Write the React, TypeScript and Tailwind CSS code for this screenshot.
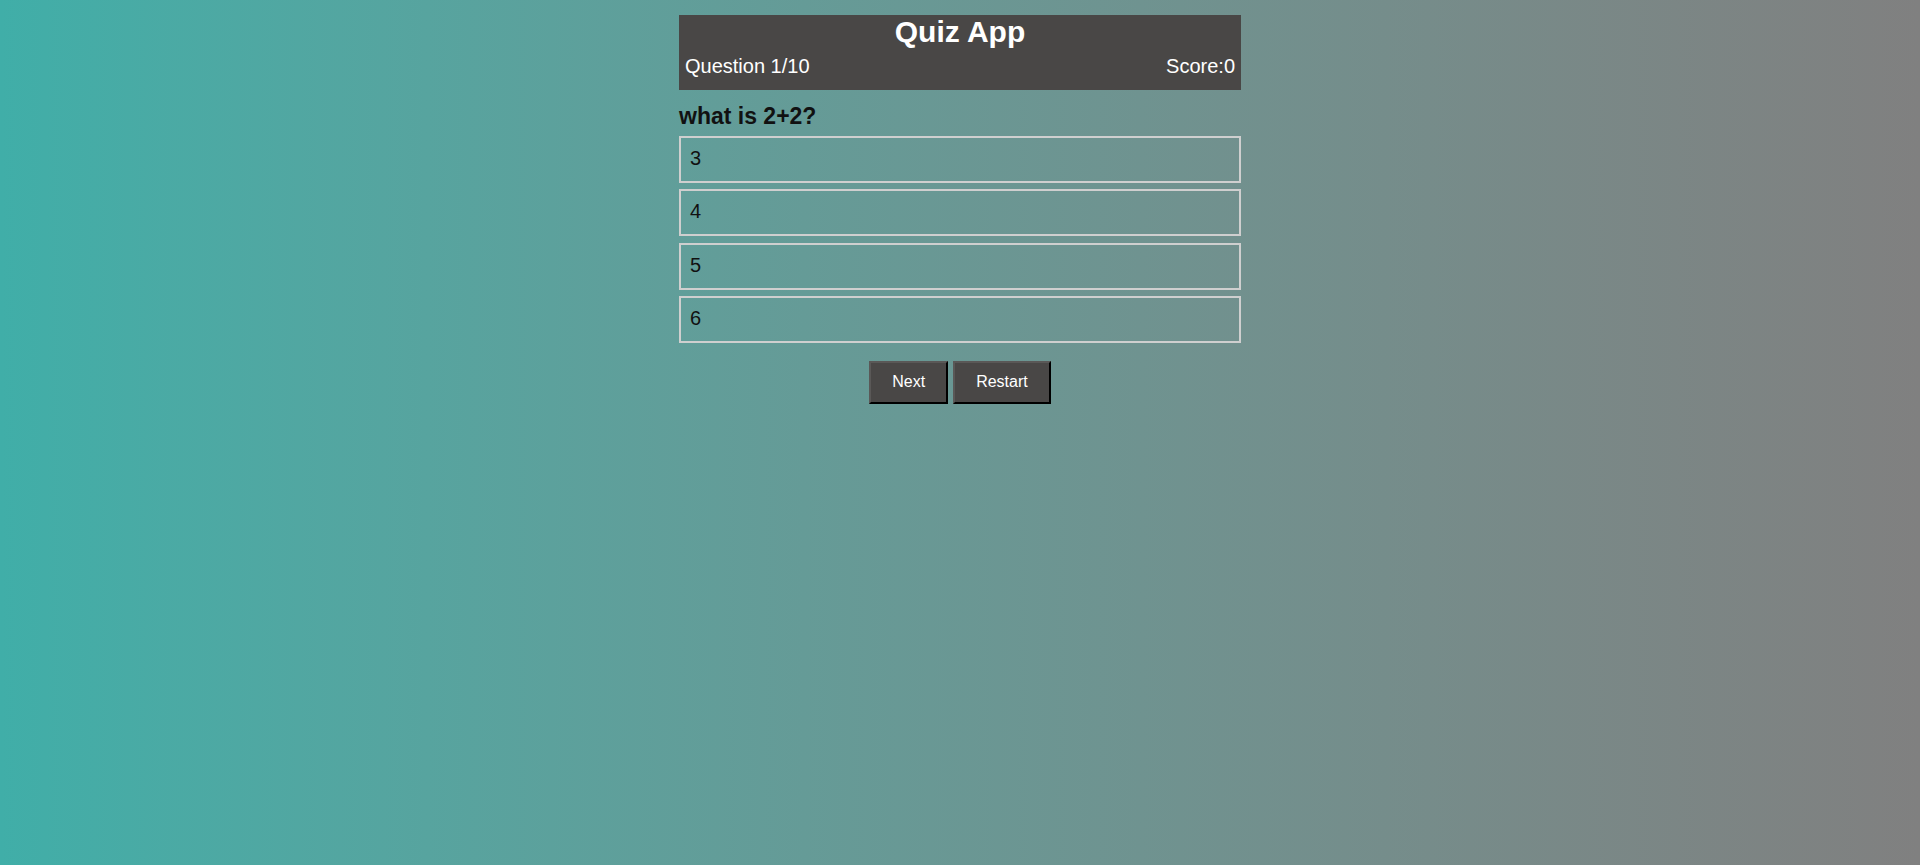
import { useState } from "react";

const questions = [
    { question: "what is 2+2?", options: ["3", "4", "5", "6"], answer: "4" },
];

export default function App() {
    const [current, setCurrent] = useState(0);
    const [score, setScore] = useState(0);
    const [selected, setSelected] = useState<string | null>(null);

    const q = questions[current];

    const next = () => {
        if (selected === q.answer) setScore(score + 1);
        setSelected(null);
        setCurrent((current + 1) % questions.length);
    };

    const restart = () => {
        setCurrent(0);
        setScore(0);
        setSelected(null);
    };

    return (
        <div
            className="min-h-screen w-full bg-gradient-to-r from-[#40aea8] to-[#808080] pt-[15px]"
            style={{ fontFamily: '"Liberation Sans", Arial, sans-serif' }}
        >
            <div className="mx-auto w-[562px]">
                <div className="bg-[#494746] text-white pt-[2px] pb-[12px]">
                    <h1 className="text-center text-[30px] font-bold leading-[30px]">Quiz App</h1>
                    <div className="flex justify-between px-[6px] mt-[7px] text-[20px] leading-[24px]">
                        <span>Question {current + 1}/10</span>
                        <span>Score:{score}</span>
                    </div>
                </div>

                <p className="mt-[12px] text-[23px] font-bold leading-[28px] text-[#111]">{q.question}</p>

                <div className="flex flex-col gap-[6.3px] mt-[6px]">
                    {q.options.map((opt) => (
                        <div
                            key={opt}
                            onClick={() => setSelected(opt)}
                            className="h-[47px] flex items-start pt-[8px] border-2 border-[#cfcfcf] px-[9px] text-[20px] leading-[24px] text-[#111] cursor-pointer"
                        >
                            {opt}
                        </div>
                    ))}
                </div>

                <div className="flex justify-center gap-[5px] mt-[18px]">
                    <button
                        onClick={next}
                        className="h-[43px] px-[21px] bg-[#494746] text-white text-[16px] border-2 border-t-[#5a5857] border-l-[#5a5857] border-r-black border-b-black cursor-pointer"
                    >
                        Next
                    </button>
                    <button
                        onClick={restart}
                        className="h-[43px] px-[21px] bg-[#494746] text-white text-[16px] border-2 border-t-[#5a5857] border-l-[#5a5857] border-r-black border-b-black cursor-pointer"
                    >
                        Restart
                    </button>
                </div>
            </div>
        </div>
    );
}
